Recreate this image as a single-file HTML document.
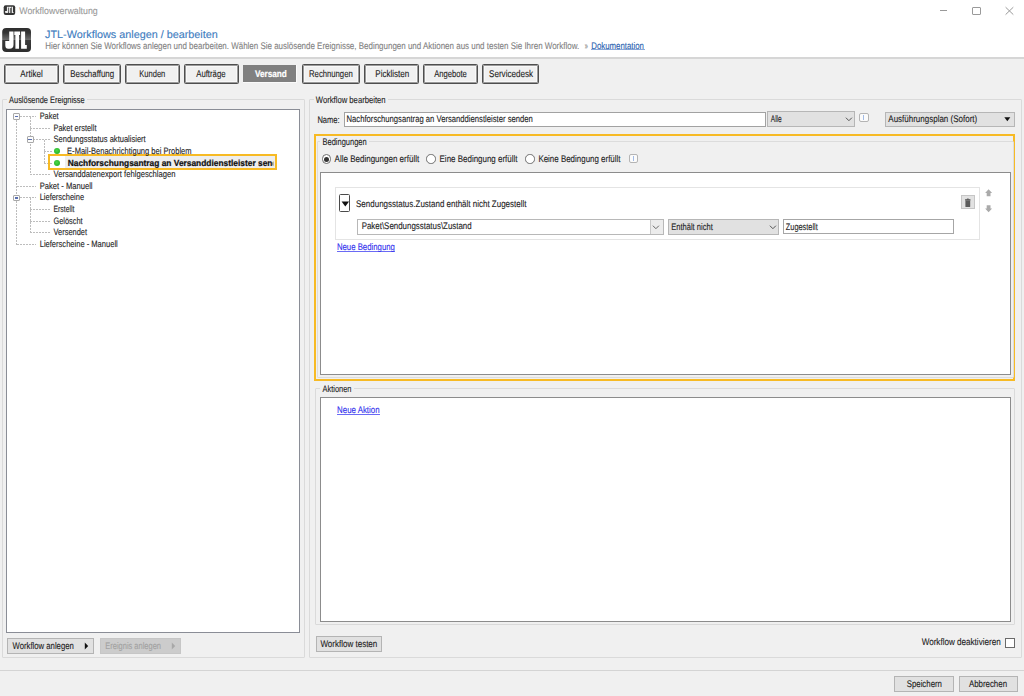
<!DOCTYPE html>
<html><head><meta charset="utf-8"><title>Workflowverwaltung</title>
<style>
html,body{margin:0;padding:0}
body{width:1024px;height:696px;position:relative;overflow:hidden;background:#f0f0f0;font-family:"Liberation Sans",sans-serif}
.a{position:absolute;box-sizing:border-box}
</style></head><body>
<div class="a" style="left:0.00px;top:0.00px;width:1024.00px;height:57.00px;background:#fff"></div>
<div class="a" style="left:0.00px;top:57.00px;width:1024.00px;height:1.50px;background:#d6d6d6"></div>
<svg class="a" style="left:3px;top:4px" width="13" height="12" viewBox="0 0 13 12">
<rect x="0.7" y="1.2" width="11.5" height="9.7" rx="2" fill="#353535"/>
<path d="M3.9 2.8h1.4v5.4q0 0.8-0.8 0.8h-1.6q-0.8 0-0.8-0.8v-1.2h1.8z" fill="#ececec"/><path d="M5.4 2.8h2.9v1.1h-1v5.1h-1.2v-5.1h-0.7z" fill="#ececec"/><path d="M8.7 2.8h1.3v5.1h0.5v1.1h-1.8z" fill="#ececec"/></svg>
<div class="a" style="left:939.80px;top:10.00px;width:7.00px;height:1.00px;background:#999"></div>
<div class="a" style="left:972.00px;top:6.50px;width:8.50px;height:8.00px;border:1px solid #9a9a9a;border-radius:1px"></div>
<svg class="a" style="left:1004px;top:6px" width="11" height="10" viewBox="0 0 11 10"><path d="M1.6 1.2L9.3 8.6M9.3 1.2L1.6 8.6" stroke="#9a9a9a" stroke-width="1"/></svg>
<svg class="a" style="left:2px;top:27.8px" width="29" height="24" viewBox="0 0 29 24">
<defs><linearGradient id="lg" x1="0" y1="0" x2="0" y2="1">
<stop offset="0" stop-color="#2e2e2e"/><stop offset="0.2" stop-color="#363636"/><stop offset="0.48" stop-color="#6a6a6a"/><stop offset="0.5" stop-color="#3a3a3a"/><stop offset="1" stop-color="#2e2e2e"/></linearGradient></defs>
<rect x="0.2" y="0" width="28.8" height="24" rx="4" fill="url(#lg)"/>
<path d="M7.2 3.4h4.3v13.4q0 4-4 4h-1.3q-2.9 0-2.9-3.5v-4.2h3.9z" fill="#fff"/>
<path d="M12.3 3.4h5.8v3.5h-1.1v13.8h-3.6v-13.8h-1.1z" fill="#fff"/>
<path d="M19.1 3.4h4v13.7h1.7v3.6h-5.7z" fill="#fff"/>
</svg>
<div class="a" style="left:591.00px;top:49.00px;width:53.50px;height:1.00px;background:#8aa8d8"></div>
<div class="a" style="left:4.20px;top:64.40px;width:55.10px;height:19.40px;border:1px solid #4e4e4e;box-shadow:inset 0 0 0 1px #9a9a9a,inset 0 0 0 2px #f8f8f8;border-radius:1.5px;background:#f0f0f0"></div>
<div class="a" style="left:63.00px;top:64.40px;width:58.30px;height:19.40px;border:1px solid #4e4e4e;box-shadow:inset 0 0 0 1px #9a9a9a,inset 0 0 0 2px #f8f8f8;border-radius:1.5px;background:#f0f0f0"></div>
<div class="a" style="left:124.90px;top:64.40px;width:55.20px;height:19.40px;border:1px solid #4e4e4e;box-shadow:inset 0 0 0 1px #9a9a9a,inset 0 0 0 2px #f8f8f8;border-radius:1.5px;background:#f0f0f0"></div>
<div class="a" style="left:184.00px;top:64.40px;width:55.10px;height:19.40px;border:1px solid #4e4e4e;box-shadow:inset 0 0 0 1px #9a9a9a,inset 0 0 0 2px #f8f8f8;border-radius:1.5px;background:#f0f0f0"></div>
<div class="a" style="left:242.60px;top:64.50px;width:54.70px;height:18.80px;background:#fafafa"></div>
<div class="a" style="left:243.40px;top:65.30px;width:53.10px;height:17.20px;background:#808080"></div>
<div class="a" style="left:301.50px;top:64.40px;width:58.80px;height:19.40px;border:1px solid #4e4e4e;box-shadow:inset 0 0 0 1px #9a9a9a,inset 0 0 0 2px #f8f8f8;border-radius:1.5px;background:#f0f0f0"></div>
<div class="a" style="left:364.20px;top:64.40px;width:54.80px;height:19.40px;border:1px solid #4e4e4e;box-shadow:inset 0 0 0 1px #9a9a9a,inset 0 0 0 2px #f8f8f8;border-radius:1.5px;background:#f0f0f0"></div>
<div class="a" style="left:423.00px;top:64.40px;width:55.00px;height:19.40px;border:1px solid #4e4e4e;box-shadow:inset 0 0 0 1px #9a9a9a,inset 0 0 0 2px #f8f8f8;border-radius:1.5px;background:#f0f0f0"></div>
<div class="a" style="left:482.00px;top:64.40px;width:57.00px;height:19.40px;border:1px solid #4e4e4e;box-shadow:inset 0 0 0 1px #9a9a9a,inset 0 0 0 2px #f8f8f8;border-radius:1.5px;background:#f0f0f0"></div>
<div class="a" style="left:2.30px;top:99.40px;width:302.40px;height:558.30px;border:1px solid #dadada;border-radius:1px"></div>
<div class="a" style="left:6.75px;top:96.40px;width:80.25px;height:6.00px;background:#f0f0f0"></div>
<div class="a" style="left:6.30px;top:109.30px;width:294.20px;height:523.80px;border:1px solid #8a8d96;background:#fff"></div>
<div class="a" style="left:16.00px;top:116.50px;width:1.00px;height:128.00px;background:repeating-linear-gradient(180deg,#bdbdbd 0 2px,transparent 2px 3px)"></div>
<div class="a" style="left:29.70px;top:116.50px;width:1.00px;height:58.18px;background:repeating-linear-gradient(180deg,#bdbdbd 0 2px,transparent 2px 3px)"></div>
<div class="a" style="left:43.50px;top:139.77px;width:1.00px;height:23.27px;background:repeating-linear-gradient(180deg,#bdbdbd 0 2px,transparent 2px 3px)"></div>
<div class="a" style="left:29.70px;top:197.95px;width:1.00px;height:34.91px;background:repeating-linear-gradient(180deg,#bdbdbd 0 2px,transparent 2px 3px)"></div>
<div class="a" style="left:16.50px;top:116.00px;width:19.80px;height:1.00px;background:repeating-linear-gradient(90deg,#bdbdbd 0 2px,transparent 2px 3px)"></div>
<div class="a" style="left:30.20px;top:127.64px;width:19.80px;height:1.00px;background:repeating-linear-gradient(90deg,#bdbdbd 0 2px,transparent 2px 3px)"></div>
<div class="a" style="left:30.20px;top:139.27px;width:19.80px;height:1.00px;background:repeating-linear-gradient(90deg,#bdbdbd 0 2px,transparent 2px 3px)"></div>
<div class="a" style="left:44.00px;top:150.91px;width:8.00px;height:1.00px;background:repeating-linear-gradient(90deg,#bdbdbd 0 2px,transparent 2px 3px)"></div>
<div class="a" style="left:44.00px;top:162.54px;width:8.00px;height:1.00px;background:repeating-linear-gradient(90deg,#bdbdbd 0 2px,transparent 2px 3px)"></div>
<div class="a" style="left:30.20px;top:174.18px;width:19.80px;height:1.00px;background:repeating-linear-gradient(90deg,#bdbdbd 0 2px,transparent 2px 3px)"></div>
<div class="a" style="left:16.50px;top:185.82px;width:19.80px;height:1.00px;background:repeating-linear-gradient(90deg,#bdbdbd 0 2px,transparent 2px 3px)"></div>
<div class="a" style="left:16.50px;top:197.45px;width:19.80px;height:1.00px;background:repeating-linear-gradient(90deg,#bdbdbd 0 2px,transparent 2px 3px)"></div>
<div class="a" style="left:30.20px;top:209.09px;width:19.80px;height:1.00px;background:repeating-linear-gradient(90deg,#bdbdbd 0 2px,transparent 2px 3px)"></div>
<div class="a" style="left:30.20px;top:220.72px;width:19.80px;height:1.00px;background:repeating-linear-gradient(90deg,#bdbdbd 0 2px,transparent 2px 3px)"></div>
<div class="a" style="left:30.20px;top:232.36px;width:19.80px;height:1.00px;background:repeating-linear-gradient(90deg,#bdbdbd 0 2px,transparent 2px 3px)"></div>
<div class="a" style="left:16.50px;top:244.00px;width:19.80px;height:1.00px;background:repeating-linear-gradient(90deg,#bdbdbd 0 2px,transparent 2px 3px)"></div>
<div class="a" style="left:13.00px;top:113.10px;width:7.00px;height:6.80px;border:1px solid #a8a8a8;background:#fbfbfb;border-radius:1px"></div>
<div class="a" style="left:14.70px;top:116.00px;width:3.40px;height:1.10px;background:#5a6fb0"></div>
<div class="a" style="left:26.70px;top:136.37px;width:7.00px;height:6.80px;border:1px solid #a8a8a8;background:#fbfbfb;border-radius:1px"></div>
<div class="a" style="left:28.40px;top:139.27px;width:3.40px;height:1.10px;background:#5a6fb0"></div>
<div class="a" style="left:54.10px;top:148.21px;width:6.2px;height:6.2px;border-radius:50%;background:radial-gradient(circle at 45% 40%,#4ad84a,#1aa81a)"></div>
<div class="a" style="left:54.10px;top:159.84px;width:6.2px;height:6.2px;border-radius:50%;background:radial-gradient(circle at 45% 40%,#4ad84a,#1aa81a)"></div>
<div class="a" style="left:47.50px;top:154.40px;width:229.50px;height:15.60px;border:2px solid #f7ba24"></div>
<div class="a" style="left:65.00px;top:156.40px;width:210.00px;height:11.60px;background:#eeeeee"></div>
<div class="a" style="left:13.00px;top:194.55px;width:7.00px;height:6.80px;border:1px solid #a8a8a8;background:#fbfbfb;border-radius:1px"></div>
<div class="a" style="left:14.70px;top:197.45px;width:3.40px;height:1.10px;background:#5a6fb0"></div>
<div class="a" style="left:7.30px;top:638.20px;width:87.00px;height:15.90px;background:#e1e1e1;border:1px solid #b4b4b4"></div>
<svg class="a" style="left:84px;top:641.9px" width="5" height="8" viewBox="0 0 5 8"><path d="M0.8 0.5L4.2 4L0.8 7.5z" fill="#111"/></svg>
<div class="a" style="left:99.50px;top:638.20px;width:81.00px;height:15.90px;background:#cccccc;border:1px solid #c6c6c6"></div>
<svg class="a" style="left:170.5px;top:641.9px" width="5" height="8" viewBox="0 0 5 8"><path d="M0.8 0.5L4.2 4L0.8 7.5z" fill="#a8a8a8"/></svg>
<div class="a" style="left:309.30px;top:99.40px;width:712.30px;height:558.50px;border:1px solid #dadada;border-radius:1px"></div>
<div class="a" style="left:313.50px;top:96.40px;width:74.40px;height:6.00px;background:#f0f0f0"></div>
<div class="a" style="left:344.00px;top:112.20px;width:421.50px;height:14.70px;border:1px solid #a2a2a2;background:#fff"></div>
<div class="a" style="left:767.40px;top:111.30px;width:87.70px;height:15.70px;background:#e1e1e1;border:1px solid #b6b6b6"></div>
<svg class="a" style="left:844.5px;top:116.8px" width="8" height="5" viewBox="0 0 8 5"><path d="M0.9 0.7L3.9 3.7L6.9 0.7" fill="none" stroke="#555" stroke-width="1"/></svg>
<div class="a" style="left:859.00px;top:113.20px;width:9.50px;height:8.60px;border:1px solid #b4b4b4;border-radius:2px;background:#fbfbfb"></div>
<div class="a" style="left:863.25px;top:115.40px;width:1.00px;height:4.30px;background:#a2bbe6"></div>
<div class="a" style="left:885.30px;top:112.20px;width:129.90px;height:14.80px;background:#e1e1e1;border:1px solid #b6b6b6"></div>
<svg class="a" style="left:1004.2px;top:117.4px" width="7" height="5" viewBox="0 0 7 5"><path d="M0.3 0.3L6.3 0.3L3.3 4.2z" fill="#111"/></svg>
<div class="a" style="left:314.00px;top:133.70px;width:701.20px;height:247.00px;border:2px solid #f7ba24"></div>
<div class="a" style="left:316.50px;top:141.20px;width:697.00px;height:236.90px;border:1px solid #dcdcdc;border-radius:1px"></div>
<div class="a" style="left:320.20px;top:137.00px;width:49.30px;height:8.00px;background:#f0f0f0"></div>
<div class="a" style="left:322.00px;top:154.30px;width:9.4px;height:9.4px;border:1.2px solid #6e6e6e;border-radius:50%;background:#fff"></div>
<div class="a" style="left:324.20px;top:156.50px;width:5px;height:5px;border-radius:50%;background:#333"></div>
<div class="a" style="left:426.20px;top:154.30px;width:9.4px;height:9.4px;border:1.2px solid #6e6e6e;border-radius:50%;background:#fff"></div>
<div class="a" style="left:525.40px;top:154.30px;width:9.4px;height:9.4px;border:1.2px solid #6e6e6e;border-radius:50%;background:#fff"></div>
<div class="a" style="left:628.50px;top:154.00px;width:9.50px;height:8.90px;border:1px solid #b4b4b4;border-radius:2px;background:#fbfbfb"></div>
<div class="a" style="left:632.75px;top:156.20px;width:1.00px;height:4.60px;background:#a2bbe6"></div>
<div class="a" style="left:320.20px;top:172.30px;width:691.00px;height:202.70px;border:1px solid #8c8c8c;background:#fff"></div>
<div class="a" style="left:335.20px;top:187.40px;width:644.70px;height:52.50px;border:1px solid #e4e4e4"></div>
<div class="a" style="left:339.10px;top:194.30px;width:10.80px;height:17.50px;border:1px solid #4a4a4a;border-radius:1.5px;background:#fff"></div>
<svg class="a" style="left:341px;top:200.6px" width="9" height="6" viewBox="0 0 9 6"><path d="M0.6 0.4L8.1 0.4L4.3 5.4z" fill="#111"/></svg>
<div class="a" style="left:357.00px;top:219.30px;width:306.80px;height:15.70px;border:1px solid #b8b8b8;background:#fff"></div>
<div class="a" style="left:650.00px;top:220.30px;width:12.80px;height:13.70px;border-left:1px solid #c8c8c8;background:#ececec"></div>
<svg class="a" style="left:652.3px;top:225.2px" width="8" height="5" viewBox="0 0 8 5"><path d="M0.9 0.7L3.9 3.7L6.9 0.7" fill="none" stroke="#666" stroke-width="1"/></svg>
<div class="a" style="left:668.10px;top:219.10px;width:111.20px;height:15.90px;background:#e1e1e1;border:1px solid #b6b6b6"></div>
<svg class="a" style="left:768.5px;top:225.3px" width="8" height="5" viewBox="0 0 8 5"><path d="M0.9 0.7L3.9 3.7L6.9 0.7" fill="none" stroke="#555" stroke-width="1"/></svg>
<div class="a" style="left:783.20px;top:219.20px;width:170.90px;height:15.00px;border:1px solid #a6a6a6;background:#fff"></div>
<div class="a" style="left:961.00px;top:195.20px;width:14.20px;height:14.20px;background:#e2e2e2;border:1px solid #c6c6c6"></div>
<svg class="a" style="left:964px;top:197.5px" width="8" height="10" viewBox="0 0 8 10"><path d="M1.4 2.4h4.8v6.1q0 0.6-0.6 0.6h-3.6q-0.6 0-0.6-0.6z" fill="#5c5c5c"/><rect x="1" y="1.3" width="5.6" height="1.1" rx="0.4" fill="#4a4a4a"/><rect x="2.9" y="0.6" width="1.8" height="0.9" fill="#4a4a4a"/></svg>
<svg class="a" style="left:985px;top:188.6px" width="8" height="8" viewBox="0 0 8 8"><path d="M3.6 0.3L7.1 3.9H5.5V7.2H1.7V3.9H0.1z" fill="#aaaaaa"/></svg>
<svg class="a" style="left:985px;top:204.8px" width="8" height="8" viewBox="0 0 8 8"><path d="M1.7 0.2H5.5V3.5H7.1L3.6 7.2L0.1 3.5H1.7z" fill="#aaaaaa"/></svg>
<div class="a" style="left:336.60px;top:250.60px;width:58.60px;height:1.00px;background:#6a6af5"></div>
<div class="a" style="left:315.40px;top:387.80px;width:699.30px;height:237.70px;border:1px solid #dadada;border-radius:1px"></div>
<div class="a" style="left:320.30px;top:384.80px;width:33.50px;height:6.00px;background:#f0f0f0"></div>
<div class="a" style="left:320.20px;top:397.30px;width:691.00px;height:224.60px;border:1px solid #8c8c8c;background:#fff"></div>
<div class="a" style="left:336.80px;top:413.60px;width:43.10px;height:1.00px;background:#6a6af5"></div>
<div class="a" style="left:316.10px;top:635.80px;width:66.00px;height:16.40px;background:#e1e1e1;border:1px solid #b4b4b4"></div>
<div class="a" style="left:1005.00px;top:637.90px;width:10.10px;height:9.90px;border:1px solid #6a6a6a;background:#fff"></div>
<div class="a" style="left:0.00px;top:669.70px;width:1024.00px;height:1.20px;background:#d4d4d4"></div>
<div class="a" style="left:894.00px;top:676.20px;width:60.00px;height:16.30px;background:#e1e1e1;border:1px solid #b4b4b4"></div>
<div class="a" style="left:958.50px;top:676.20px;width:59.80px;height:16.30px;background:#e1e1e1;border:1px solid #b4b4b4"></div>
<svg class="a" style="left:0;top:0" width="1024" height="696" font-family="Liberation Sans" text-rendering="geometricPrecision"><defs><clipPath id="selclip"><rect x="65" y="156" width="208.3" height="12"/></clipPath></defs><text x="19.30" y="14" font-size="9.6" fill="#9a9a9a" stroke="#9a9a9a" stroke-width="0.12" textLength="78.40" lengthAdjust="spacingAndGlyphs">Workflowverwaltung</text>
<text x="45.05" y="38" font-size="10.8" fill="#3d7cc0" stroke="#3d7cc0" stroke-width="0.12" textLength="172.65" lengthAdjust="spacingAndGlyphs">JTL-Workflows anlegen / bearbeiten</text>
<text x="45.30" y="49" font-size="9.6" fill="#838383" stroke="#838383" stroke-width="0.12" textLength="533.88" lengthAdjust="spacingAndGlyphs">Hier können Sie Workflows anlegen und bearbeiten. Wählen Sie auslösende Ereignisse, Bedingungen und Aktionen aus und testen Sie Ihren Workflow.</text>
<text x="584.70" y="49" font-size="9.6" fill="#838383" stroke="#838383" stroke-width="0.12" textLength="3.01" lengthAdjust="spacingAndGlyphs">»</text>
<text x="591.30" y="49" font-size="9.6" fill="#2a62b0" stroke="#2a62b0" stroke-width="0.12" textLength="52.61" lengthAdjust="spacingAndGlyphs">Dokumentation</text>
<text x="20.36" y="77" font-size="9.8" fill="#1e1e1e" stroke="#1e1e1e" stroke-width="0.12" textLength="22.36" lengthAdjust="spacingAndGlyphs">Artikel</text>
<text x="70.30" y="77" font-size="9.8" fill="#1e1e1e" stroke="#1e1e1e" stroke-width="0.12" textLength="43.81" lengthAdjust="spacingAndGlyphs">Beschaffung</text>
<text x="139.30" y="77" font-size="9.8" fill="#1e1e1e" stroke="#1e1e1e" stroke-width="0.12" textLength="25.98" lengthAdjust="spacingAndGlyphs">Kunden</text>
<text x="196.20" y="77" font-size="9.8" fill="#1e1e1e" stroke="#1e1e1e" stroke-width="0.12" textLength="29.40" lengthAdjust="spacingAndGlyphs">Aufträge</text>
<text x="254.90" y="77" font-size="9.6" fill="#ffffff" stroke="#ffffff" stroke-width="0.22" font-weight="bold" textLength="31.91" lengthAdjust="spacingAndGlyphs">Versand</text>
<text x="309.05" y="77" font-size="9.8" fill="#1e1e1e" stroke="#1e1e1e" stroke-width="0.12" textLength="43.66" lengthAdjust="spacingAndGlyphs">Rechnungen</text>
<text x="375.30" y="77" font-size="9.8" fill="#1e1e1e" stroke="#1e1e1e" stroke-width="0.12" textLength="33.99" lengthAdjust="spacingAndGlyphs">Picklisten</text>
<text x="434.30" y="77" font-size="9.8" fill="#1e1e1e" stroke="#1e1e1e" stroke-width="0.12" textLength="32.51" lengthAdjust="spacingAndGlyphs">Angebote</text>
<text x="489.05" y="77" font-size="9.8" fill="#1e1e1e" stroke="#1e1e1e" stroke-width="0.12" textLength="44.03" lengthAdjust="spacingAndGlyphs">Servicedesk</text>
<text x="9.05" y="103" font-size="9.4" fill="#1e1e1e" stroke="#1e1e1e" stroke-width="0.12" textLength="75.64" lengthAdjust="spacingAndGlyphs">Auslösende Ereignisse</text>
<text x="39.70" y="119" font-size="9.2" fill="#1e1e1e" stroke="#1e1e1e" stroke-width="0.12" textLength="18.92" lengthAdjust="spacingAndGlyphs">Paket</text>
<text x="53.50" y="131" font-size="9.2" fill="#1e1e1e" stroke="#1e1e1e" stroke-width="0.12" textLength="42.95" lengthAdjust="spacingAndGlyphs">Paket erstellt</text>
<text x="53.50" y="142" font-size="9.2" fill="#1e1e1e" stroke="#1e1e1e" stroke-width="0.12" textLength="92.20" lengthAdjust="spacingAndGlyphs">Sendungsstatus aktualisiert</text>
<text x="67.10" y="154" font-size="9.2" fill="#1e1e1e" stroke="#1e1e1e" stroke-width="0.12" textLength="124.49" lengthAdjust="spacingAndGlyphs">E-Mail-Benachrichtigung bei Problem</text>
<text x="53.50" y="177" font-size="9.2" fill="#1e1e1e" stroke="#1e1e1e" stroke-width="0.12" textLength="122.02" lengthAdjust="spacingAndGlyphs">Versanddatenexport fehlgeschlagen</text>
<text x="39.70" y="189" font-size="9.2" fill="#1e1e1e" stroke="#1e1e1e" stroke-width="0.12" textLength="52.88" lengthAdjust="spacingAndGlyphs">Paket - Manuell</text>
<text x="39.70" y="200" font-size="9.2" fill="#1e1e1e" stroke="#1e1e1e" stroke-width="0.12" textLength="44.39" lengthAdjust="spacingAndGlyphs">Lieferscheine</text>
<text x="53.50" y="212" font-size="9.2" fill="#1e1e1e" stroke="#1e1e1e" stroke-width="0.12" textLength="20.91" lengthAdjust="spacingAndGlyphs">Erstellt</text>
<text x="53.50" y="224" font-size="9.2" fill="#1e1e1e" stroke="#1e1e1e" stroke-width="0.12" textLength="29.11" lengthAdjust="spacingAndGlyphs">Gelöscht</text>
<text x="53.50" y="235" font-size="9.2" fill="#1e1e1e" stroke="#1e1e1e" stroke-width="0.12" textLength="33.49" lengthAdjust="spacingAndGlyphs">Versendet</text>
<text x="39.70" y="247" font-size="9.2" fill="#1e1e1e" stroke="#1e1e1e" stroke-width="0.12" textLength="78.09" lengthAdjust="spacingAndGlyphs">Lieferscheine - Manuell</text>
<text x="67.75" y="166" font-size="8.8" fill="#111" stroke="#111" stroke-width="0.22" font-weight="bold" textLength="219.53" lengthAdjust="spacingAndGlyphs" clip-path="url(#selclip)">Nachforschungsantrag an Versanddienstleister senden</text>
<text x="12.50" y="649" font-size="9.6" fill="#1e1e1e" stroke="#1e1e1e" stroke-width="0.12" textLength="61.30" lengthAdjust="spacingAndGlyphs">Workflow anlegen</text>
<text x="105.30" y="649" font-size="9.6" fill="#a2a2a2" stroke="#a2a2a2" stroke-width="0.12" textLength="55.65" lengthAdjust="spacingAndGlyphs">Ereignis anlegen</text>
<text x="315.80" y="103" font-size="9.4" fill="#1e1e1e" stroke="#1e1e1e" stroke-width="0.12" textLength="69.82" lengthAdjust="spacingAndGlyphs">Workflow bearbeiten</text>
<text x="317.40" y="123" font-size="9.6" fill="#1e1e1e" stroke="#1e1e1e" stroke-width="0.12" textLength="22.30" lengthAdjust="spacingAndGlyphs">Name:</text>
<text x="346.55" y="122" font-size="9.6" fill="#1e1e1e" stroke="#1e1e1e" stroke-width="0.12" textLength="186.24" lengthAdjust="spacingAndGlyphs">Nachforschungsantrag an Versanddienstleister senden</text>
<text x="770.80" y="122" font-size="9.6" fill="#1e1e1e" stroke="#1e1e1e" stroke-width="0.12" textLength="10.88" lengthAdjust="spacingAndGlyphs">Alle</text>
<text x="888.30" y="122" font-size="9.6" fill="#1e1e1e" stroke="#1e1e1e" stroke-width="0.12" textLength="88.88" lengthAdjust="spacingAndGlyphs">Ausführungsplan (Sofort)</text>
<text x="322.55" y="145" font-size="9.6" fill="#1e1e1e" stroke="#1e1e1e" stroke-width="0.12" textLength="44.15" lengthAdjust="spacingAndGlyphs">Bedingungen</text>
<text x="334.55" y="162" font-size="9.6" fill="#1e1e1e" stroke="#1e1e1e" stroke-width="0.12" textLength="84.64" lengthAdjust="spacingAndGlyphs">Alle Bedingungen erfüllt</text>
<text x="439.55" y="162" font-size="9.6" fill="#1e1e1e" stroke="#1e1e1e" stroke-width="0.12" textLength="77.95" lengthAdjust="spacingAndGlyphs">Eine Bedingung erfüllt</text>
<text x="538.40" y="162" font-size="9.6" fill="#1e1e1e" stroke="#1e1e1e" stroke-width="0.12" textLength="82.11" lengthAdjust="spacingAndGlyphs">Keine Bedingung erfüllt</text>
<text x="356.05" y="207" font-size="9.6" fill="#1e1e1e" stroke="#1e1e1e" stroke-width="0.12" textLength="170.42" lengthAdjust="spacingAndGlyphs">Sendungsstatus.Zustand enthält nicht Zugestellt</text>
<text x="361.70" y="229" font-size="9.6" fill="#1e1e1e" stroke="#1e1e1e" stroke-width="0.12" textLength="109.99" lengthAdjust="spacingAndGlyphs">Paket\Sendungsstatus\Zustand</text>
<text x="671.20" y="230" font-size="9.6" fill="#1e1e1e" stroke="#1e1e1e" stroke-width="0.12" textLength="41.59" lengthAdjust="spacingAndGlyphs">Enthält nicht</text>
<text x="785.80" y="230" font-size="9.6" fill="#1e1e1e" stroke="#1e1e1e" stroke-width="0.12" textLength="32.00" lengthAdjust="spacingAndGlyphs">Zugestellt</text>
<text x="336.90" y="250" font-size="9.6" fill="#3333ee" stroke="#3333ee" stroke-width="0.12" textLength="58.01" lengthAdjust="spacingAndGlyphs">Neue Bedingung</text>
<text x="322.60" y="392" font-size="9.4" fill="#1e1e1e" stroke="#1e1e1e" stroke-width="0.12" textLength="28.91" lengthAdjust="spacingAndGlyphs">Aktionen</text>
<text x="337.10" y="413" font-size="9.6" fill="#3333ee" stroke="#3333ee" stroke-width="0.12" textLength="42.48" lengthAdjust="spacingAndGlyphs">Neue Aktion</text>
<text x="320.40" y="647" font-size="9.6" fill="#1e1e1e" stroke="#1e1e1e" stroke-width="0.12" textLength="56.90" lengthAdjust="spacingAndGlyphs">Workflow testen</text>
<text x="921.70" y="645" font-size="9.6" fill="#1e1e1e" stroke="#1e1e1e" stroke-width="0.12" textLength="78.99" lengthAdjust="spacingAndGlyphs">Workflow deaktivieren</text>
<text x="906.70" y="687" font-size="9.6" fill="#1e1e1e" stroke="#1e1e1e" stroke-width="0.12" textLength="35.29" lengthAdjust="spacingAndGlyphs">Speichern</text>
<text x="968.90" y="687" font-size="9.6" fill="#1e1e1e" stroke="#1e1e1e" stroke-width="0.12" textLength="38.12" lengthAdjust="spacingAndGlyphs">Abbrechen</text></svg>
</body></html>
